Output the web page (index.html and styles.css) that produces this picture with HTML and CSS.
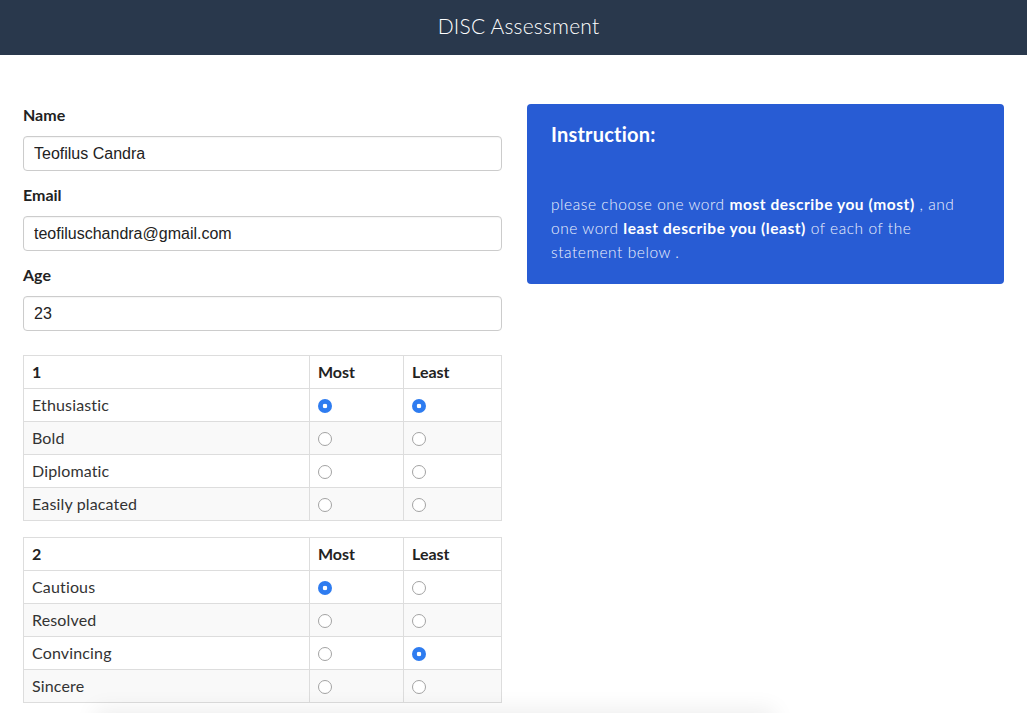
FILE: index.html
```html
<!DOCTYPE html>
<html>
<head>
<meta charset="utf-8">
<title>DISC Assessment</title>
<link rel="stylesheet" href="styles.css">
</head>
<body>
<header class="topbar"><span class="title">DISC Assessment</span></header>
<main class="page">
  <section class="left">
    <div class="field">
      <label class="label">Name</label>
      <input class="input" type="text" value="Teofilus Candra">
    </div>
    <div class="field">
      <label class="label">Email</label>
      <input class="input" type="text" value="teofiluschandra@gmail.com">
    </div>
    <div class="field">
      <label class="label">Age</label>
      <input class="input" type="text" value="23">
    </div>

    <table class="qtable">
      <colgroup><col><col class="c-most"><col class="c-least"></colgroup>
      <thead><tr><th>1</th><th>Most</th><th>Least</th></tr></thead>
      <tbody>
        <tr><td>Ethusiastic</td><td><input class="radio" type="radio" name="m1" checked></td><td><input class="radio" type="radio" name="l1" checked></td></tr>
        <tr><td>Bold</td><td><input class="radio" type="radio" name="m1"></td><td><input class="radio" type="radio" name="l1"></td></tr>
        <tr><td>Diplomatic</td><td><input class="radio" type="radio" name="m1"></td><td><input class="radio" type="radio" name="l1"></td></tr>
        <tr><td>Easily placated</td><td><input class="radio" type="radio" name="m1"></td><td><input class="radio" type="radio" name="l1"></td></tr>
      </tbody>
    </table>

    <table class="qtable">
      <colgroup><col><col class="c-most"><col class="c-least"></colgroup>
      <thead><tr><th>2</th><th>Most</th><th>Least</th></tr></thead>
      <tbody>
        <tr><td>Cautious</td><td><input class="radio" type="radio" name="m2" checked></td><td><input class="radio" type="radio" name="l2"></td></tr>
        <tr><td>Resolved</td><td><input class="radio" type="radio" name="m2"></td><td><input class="radio" type="radio" name="l2"></td></tr>
        <tr><td>Convincing</td><td><input class="radio" type="radio" name="m2"></td><td><input class="radio" type="radio" name="l2" checked></td></tr>
        <tr><td>Sincere</td><td><input class="radio" type="radio" name="m2"></td><td><input class="radio" type="radio" name="l2"></td></tr>
      </tbody>
    </table>
  </section>
  <aside class="right">
    <div class="instruction">
      <h3 class="ins-title">Instruction:</h3>
      <p class="ins-text">please choose one word <b>most describe you (most)</b> , and<br>one word <b>least describe you (least)</b> of each of the<br>statement below .</p>
    </div>
  </aside>
</main>
<div class="bottom-shadow"></div>
</body>
</html>
```

FILE: styles.css
```css
* { box-sizing: border-box; }
html, body { margin: 0; padding: 0; background: #fff; }
body {
  font-family: "Lato", "Noto Sans", sans-serif;
  color: #333;
  overflow: hidden;
}
.topbar {
  height: 55px;
  background: #29384c;
  display: flex;
  align-items: center;
  justify-content: center;
  padding-left: 10px;
}
.title {
  color: #fff;
  font-weight: 300;
  font-size: 21px;
  letter-spacing: 0.2px;
  margin-top: -5px;
}
.page {
  display: flex;
  gap: 25px;
  padding: 49px 23px 0 23px;
}
.left { width: 479px; flex: none; }
.right { flex: 1; }
.field { display: flex; flex-direction: column; margin-bottom: 13.5px; }
.label {
  font-weight: 700;
  font-size: 16px;
  line-height: 21px;
  margin-bottom: 10.5px;
  color: #222;
}
.input {
  height: 35px;
  border: 1px solid #ccc;
  border-radius: 4px;
  padding: 2px 10px 0 10px;
  font-family: "Liberation Sans", Arial, sans-serif;
  font-size: 16px;
  color: #222;
  box-shadow: inset 0 1px 1px rgba(0,0,0,0.04);
  outline: none;
}
.field:last-of-type { margin-bottom: 24px; }
.qtable {
  width: 479px;
  border-collapse: collapse;
  margin-bottom: 16px;
  font-size: 16px;
}
.c-most { width: 94px; }
.c-least { width: 98px; }
.qtable th, .qtable td {
  border: 1px solid #ddd;
  padding: 6px 8px;
  height: 33px;
  line-height: 20px;
  text-align: left;
  vertical-align: middle;
}
.qtable th { font-weight: 700; color: #222; }
.qtable td { font-weight: 400; color: #333; letter-spacing: 0.15px; }
.qtable tbody tr:nth-child(even) td { background: #f9f9f9; }
.radio {
  appearance: none;
  -webkit-appearance: none;
  width: 14px;
  height: 14px;
  margin: 3px 0 0 0;
  border: 1px solid #a3a3a3;
  border-radius: 50%;
  background: #fff;
  display: block;
}
.radio:checked {
  border: none;
  background: radial-gradient(circle, #fff 0 2px, #2e7cf0 2.6px);
}
.instruction {
  background: #285cd4;
  border-radius: 4px;
  height: 180px;
  padding: 17px 20px 19px 24px;
  color: #fff;
}
.ins-title {
  margin: 0;
  font-size: 20px;
  line-height: 26px;
  font-weight: 700;
  letter-spacing: 0.2px;
}
.ins-text {
  margin: 45px 0 0 0;
  font-size: 15.5px;
  line-height: 24px;
  font-weight: 300;
  letter-spacing: 0.55px;
  color: #eef2fd;
  white-space: nowrap;
}
.ins-text b { font-weight: 700; color: #fff; }
.bottom-shadow {
  position: fixed;
  left: 95px;
  width: 680px;
  top: 713px;
  height: 40px;
  box-shadow: 0 -4px 22px rgba(0,0,0,0.07);
}
```
